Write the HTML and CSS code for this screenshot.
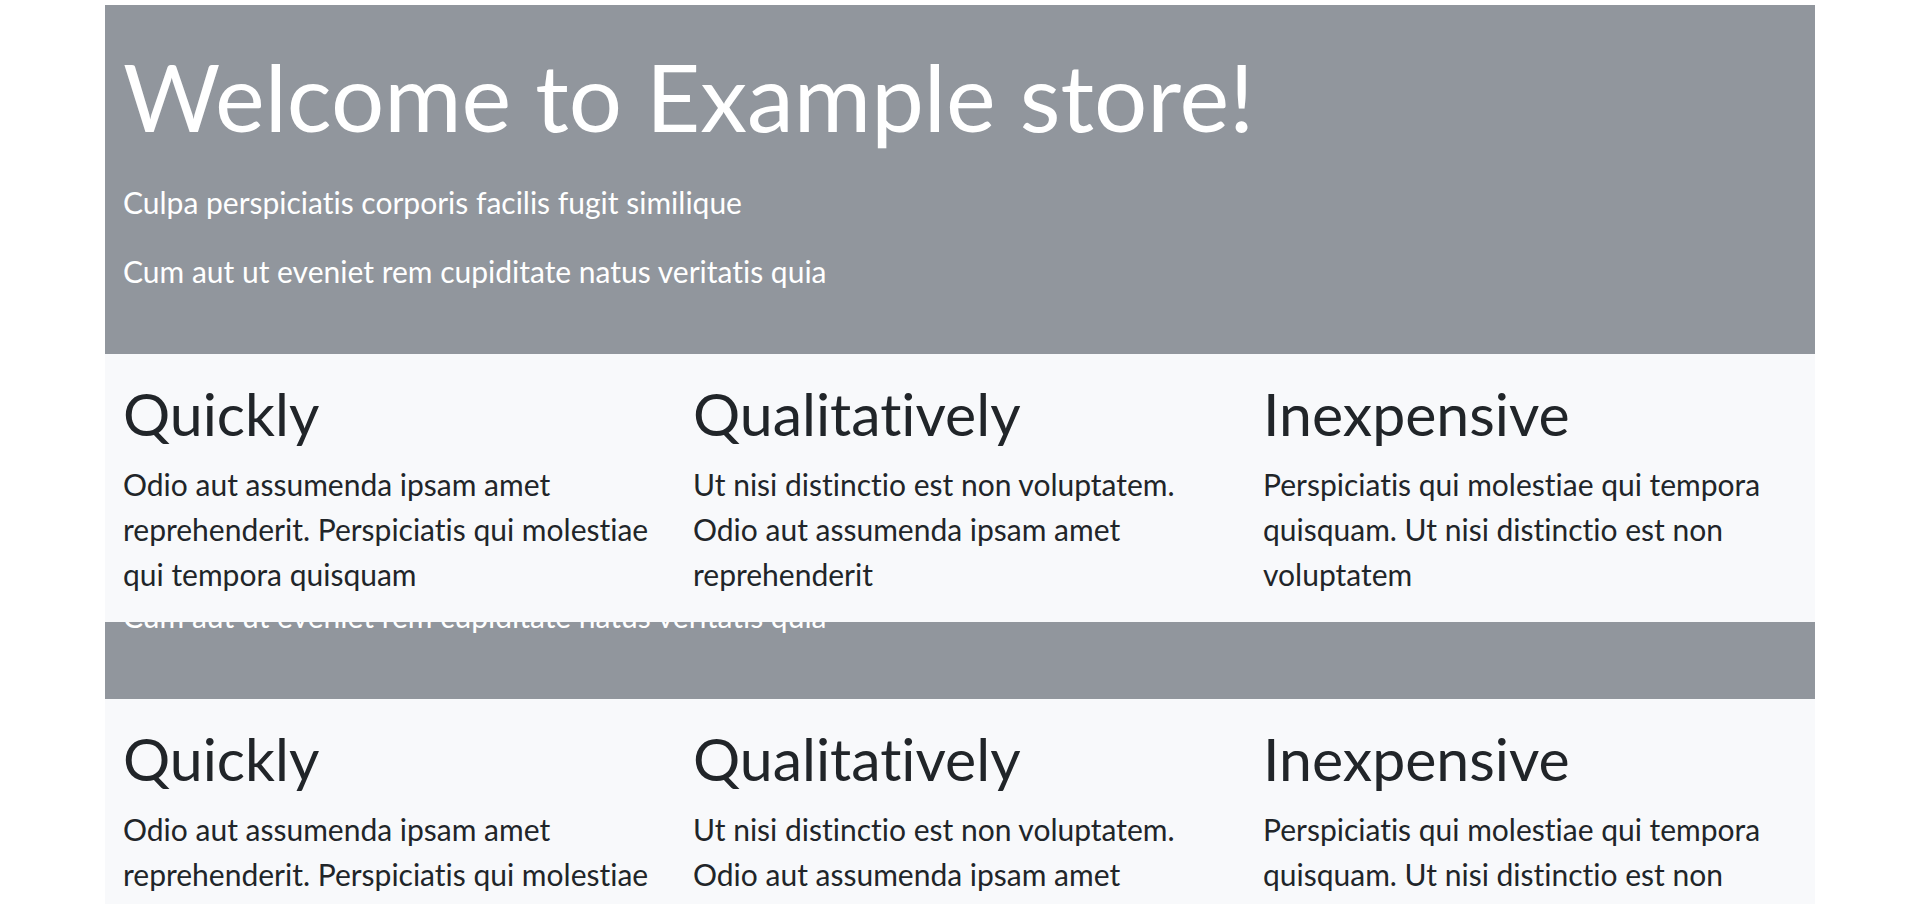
FILE: index.html
```html
<!DOCTYPE html>
<html lang="en">
<head>
<meta charset="utf-8">
<meta name="viewport" content="width=device-width, initial-scale=1">
<title>Example store</title>
<link rel="stylesheet" href="styles.css">
</head>
<body>
<main class="container">
  <section class="hero">
    <h1 class="hero-title">Welcome to Example store!</h1>
    <p class="text">Culpa perspiciatis corporis facilis fugit similique</p>
    <p class="text">Cum aut ut eveniet rem cupiditate natus veritatis quia</p>
  </section>
  <section class="features">
    <article class="feature">
      <h2 class="feature-title">Quickly</h2>
      <p class="text">Odio aut assumenda ipsam amet reprehenderit. Perspiciatis qui molestiae qui tempora quisquam</p>
    </article>
    <article class="feature">
      <h2 class="feature-title">Qualitatively</h2>
      <p class="text">Ut nisi distinctio est non voluptatem. Odio aut assumenda ipsam amet reprehenderit</p>
    </article>
    <article class="feature">
      <h2 class="feature-title">Inexpensive</h2>
      <p class="text">Perspiciatis qui molestiae qui tempora quisquam. Ut nisi distinctio est non voluptatem</p>
    </article>
  </section>
  <section class="hero hero-cut">
    <p class="text">Cum aut ut eveniet rem cupiditate natus veritatis quia</p>
  </section>
  <section class="features">
    <article class="feature">
      <h2 class="feature-title">Quickly</h2>
      <p class="text">Odio aut assumenda ipsam amet reprehenderit. Perspiciatis qui molestiae qui tempora quisquam</p>
    </article>
    <article class="feature">
      <h2 class="feature-title">Qualitatively</h2>
      <p class="text">Ut nisi distinctio est non voluptatem. Odio aut assumenda ipsam amet reprehenderit</p>
    </article>
    <article class="feature">
      <h2 class="feature-title">Inexpensive</h2>
      <p class="text">Perspiciatis qui molestiae qui tempora quisquam. Ut nisi distinctio est non voluptatem</p>
    </article>
  </section>
</main>
</body>
</html>
```
FILE: styles.css
```css
* {
  box-sizing: border-box;
}

body {
  height: 100vh;
  margin: 0;
  overflow: hidden;
  background: #fff;
  color: #212529;
  font-family: "Google Sans", "Product Sans", Lato, "Liberation Sans", sans-serif;
  font-variant-ligatures: none;
}

.container {
  max-width: 1710px;
  margin: 0 auto;
  padding-top: 5px;
}

.hero {
  padding: 36px 18px;
  background: #91969d;
  color: #fff;
}

.hero-title {
  margin: 0 0 30px;
  font-size: 94px;
  font-weight: 400;
  line-height: 109px;
}

.text {
  margin: 0 0 24px;
  font-size: 30px;
  line-height: 45px;
}

/* Only the lower edge of this banner shows below the features. */
.hero-cut {
  display: flex;
  align-items: flex-end;
  height: 77px;
  padding-top: 0;
  overflow: hidden;
}

.features {
  display: grid;
  grid-template-columns: repeat(3, 1fr);
  padding: 24px 0 1px;
  background: #f8f9fb;
}

.feature {
  padding: 0 18px;
}

.feature-title {
  margin: 0 0 12px;
  font-size: 59px;
  font-weight: 400;
  line-height: 72px;
}
```
